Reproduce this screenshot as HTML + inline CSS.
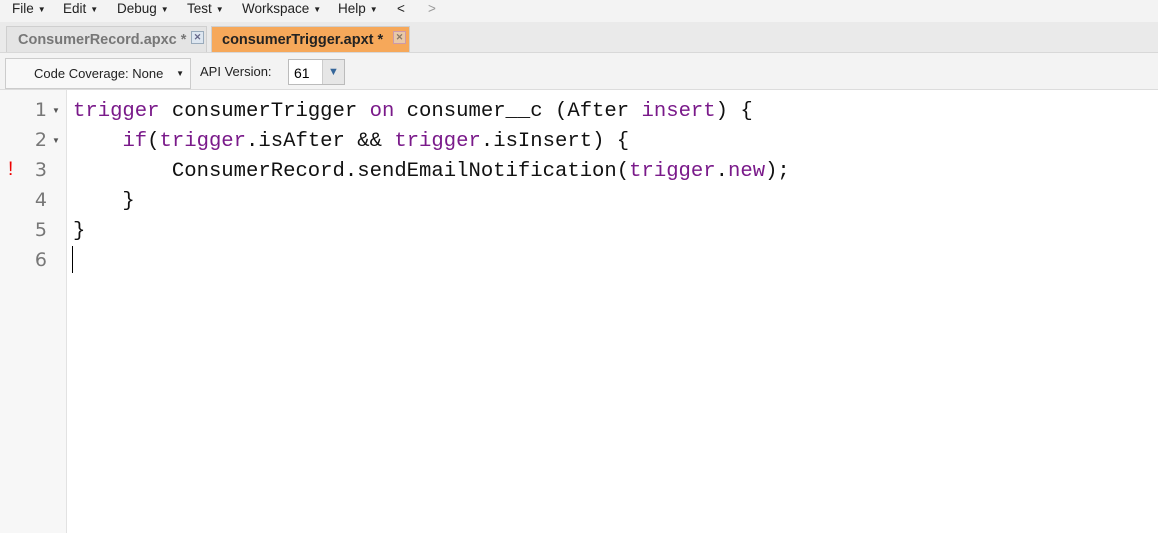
<!DOCTYPE html>
<html><head><style>
body{margin:0;width:1158px;height:533px;overflow:hidden;background:#fff;font-family:"Liberation Sans",sans-serif;position:relative}
.menu{position:absolute;left:0;top:0;width:1158px;height:22px;background:#f3f3f3;font-size:13.5px;color:#222}
.menu span{position:absolute;top:1px}
.tri{position:static!important;font-size:8px;vertical-align:1px;margin-left:4px}
.tabs{position:absolute;left:0;top:22px;width:1158px;height:30px;background:#eaeaea;border-bottom:1px solid #d8d8d8}
.tab{position:absolute;top:4px;height:25px;font-size:14.5px;font-weight:bold;line-height:26px;border:1px solid #cfcfcf;border-bottom:none}
.x{position:absolute;top:4px;width:11px;height:11px;border:1px solid #9ab;background:#dde6f0;font-size:9px;line-height:10px;text-align:center;color:#668}
.tb{position:absolute;left:0;top:53px;width:1158px;height:36px;background:#f3f3f3;border-bottom:1px solid #dcdcdc}
.gut{position:absolute;left:0;top:90px;width:66px;height:443px;background:#f7f7f7;border-right:1px solid #e2e2e2}
.ln{position:absolute;left:0;width:47px;text-align:right;font-family:"DejaVu Sans",sans-serif;font-size:19px;color:#777}
.code{position:absolute;left:73px;font-family:"Liberation Mono",monospace;font-size:20.6px;color:#111;white-space:pre;line-height:30px}
.k{color:#7a1a8a}
</style></head><body>
<div class="menu">
<span style="left:12px">File<span class="tri">▼</span></span>
<span style="left:63px">Edit<span class="tri">▼</span></span>
<span style="left:117px">Debug<span class="tri">▼</span></span>
<span style="left:187px">Test<span class="tri">▼</span></span>
<span style="left:242px">Workspace<span class="tri">▼</span></span>
<span style="left:338px">Help<span class="tri">▼</span></span>
<span style="left:397px">&lt;</span>
<span style="left:428px;color:#999">&gt;</span>
</div>
<div class="tabs">
<div class="tab" style="left:6px;width:199px;background:#e4e4e4;color:#777"><span style="margin-left:11px">ConsumerRecord.apxc *</span><div class="x" style="left:184px">✕</div></div>
<div class="tab" style="left:211px;width:197px;background:#f6a85a;color:#222"><span style="margin-left:10px">consumerTrigger.apxt *</span><div class="x" style="left:181px;background:#e8c8a8;border-color:#c9a;color:#876">✕</div></div>
</div>
<div class="tb">
<div style="position:absolute;left:5px;top:5px;width:184px;height:29px;border:1px solid #ccc;background:#f8f8f8;font-size:13px;line-height:29px;color:#222"><span style="margin-left:28px">Code Coverage: None</span><span style="position:absolute;right:6px;font-size:8px">▼</span></div>
<div style="position:absolute;left:200px;top:11px;font-size:13px;color:#222">API Version:</div>
<div style="position:absolute;left:288px;top:6px;width:55px;height:24px;border:1px solid #bbb;background:#fff;font-size:14px;line-height:26px"><span style="margin-left:5px">61</span><div style="position:absolute;right:0;top:0;width:21px;height:24px;background:#e6e6e6;border-left:1px solid #ccc;color:#35669a;font-size:11px;text-align:center;line-height:24px">▼</div></div>
</div>
<div class="gut"></div>
<div class="ln" style="top:99px">1</div><div style="position:absolute;left:52px;top:106px;font-size:8px;color:#555">▼</div>
<div class="ln" style="top:129px">2</div><div style="position:absolute;left:52px;top:136px;font-size:8px;color:#555">▼</div>
<div style="position:absolute;left:8px;top:159px;color:#e00;font-size:19px">!</div>
<div class="ln" style="top:159px">3</div>
<div class="ln" style="top:189px">4</div>
<div class="ln" style="top:219px">5</div>
<div class="ln" style="top:249px">6</div>
<div class="code" style="top:97px"><span class="k">trigger</span> consumerTrigger <span class="k">on</span> consumer__c (After <span class="k">insert</span>) {
    <span class="k">if</span>(<span class="k">trigger</span>.isAfter &amp;&amp; <span class="k">trigger</span>.isInsert) {
        ConsumerRecord.sendEmailNotification(<span class="k">trigger</span>.<span class="k">new</span>);
    }
}</div>
<div style="position:absolute;left:72px;top:246px;width:1px;height:27px;background:#000"></div>
</body></html>
